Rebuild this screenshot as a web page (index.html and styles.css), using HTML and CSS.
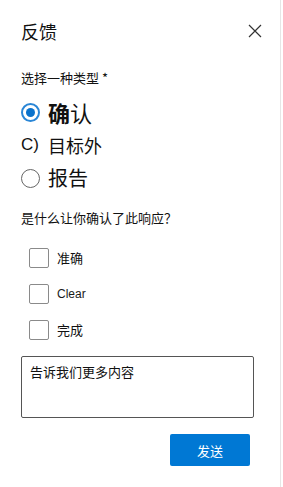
FILE: index.html
```html
<!DOCTYPE html>
<html lang="zh">
<head>
<meta charset="utf-8">
<link rel="stylesheet" href="styles.css">
</head>
<body>
<div class="panel">
  <div class="header">
    <div class="title">反馈</div>
    <svg class="close" width="14" height="14" viewBox="0 0 14 14"><path d="M1 1 L13 13 M13 1 L1 13" stroke="#333" stroke-width="1.2" fill="none"/></svg>
  </div>
  <div class="type-label">选择一种类型 *</div>
  <div class="row r1"><span class="radio on"></span><span class="opt big"><b>确</b>认</span></div>
  <div class="row r2"><span class="copt">C)</span><span class="opt mid">目标外</span></div>
  <div class="row r3"><span class="radio"></span><span class="opt med">报告</span></div>
  <div class="question">是什么让你确认了此响应？</div>
  <div class="checks">
    <div class="check"><span class="box"></span><span class="clabel">准确</span></div>
    <div class="check"><span class="box"></span><span class="clabel latin">Clear</span></div>
    <div class="check"><span class="box"></span><span class="clabel">完成</span></div>
  </div>
  <div class="textarea">告诉我们更多内容</div>
  <div class="actions"><div class="send">发送</div></div>
</div>
</body>
</html>
```
FILE: styles.css
```css
html, body { margin: 0; padding: 0; background: #fff; }
body { font-family: "Noto Sans CJK SC", "Liberation Sans", sans-serif; color: #111; }
.panel { width: 281px; height: 487px; box-sizing: border-box; border-right: 1px solid #e6e6e6; padding: 0 0 0 21px; }
.header { display: flex; justify-content: space-between; align-items: center; padding-top: 19px; padding-right: 18px; height: 24px; }
.title { font-size: 18px; line-height: 24px; }
.close { display: block; margin-top: 0; }
.type-label { margin-top: 26px; font-size: 13px; line-height: 18px; height: 18px; }
.row { display: flex; align-items: center; height: 24px; }
.r1 { margin-top: 13px; }
.r2 { margin-top: 9px; }
.r3 { margin-top: 9px; }
.radio { width: 19px; height: 19px; box-sizing: border-box; border-radius: 50%; border: 1px solid #666; margin-right: 8px; display: flex; align-items: center; justify-content: center; flex: none; }
.radio.on { border: 2px solid #2a86d6; }
.radio.on::after { content: ""; width: 9px; height: 9px; border-radius: 50%; background: #0a72cc; }
.opt { line-height: 24px; }
.big { font-size: 22px; }
.big b { font-weight: 700; }
.mid { font-size: 18px; margin-left: 6px; }
.med { font-size: 20px; }
.copt { font-family: "Liberation Sans", sans-serif; font-size: 17px; width: 21px; }
.question { margin-top: 19px; font-size: 13px; line-height: 18px; height: 18px; }
.checks { margin-top: 21px; padding-left: 8px; display: flex; flex-direction: column; gap: 16px; }
.check { display: flex; align-items: center; height: 20px; }
.box { width: 20px; height: 20px; box-sizing: border-box; border: 1px solid #8a8a8a; border-radius: 2px; margin-right: 8px; flex: none; }
.clabel { font-size: 13px; line-height: 18px; }
.clabel.latin { font-family: "Liberation Sans", sans-serif; font-size: 12px; color: #1a1a1a; }
.textarea { margin-top: 16px; width: 233px; height: 62px; box-sizing: border-box; border: 1px solid #555; border-radius: 2px; padding: 6px 8px; font-size: 13px; line-height: 18px; }
.actions { margin-top: 16px; width: 229px; display: flex; justify-content: flex-end; }
.send { width: 80px; height: 32px; background: #0078d4; color: #fff; border-radius: 2px; font-size: 13px; display: flex; align-items: center; justify-content: center; }
```
